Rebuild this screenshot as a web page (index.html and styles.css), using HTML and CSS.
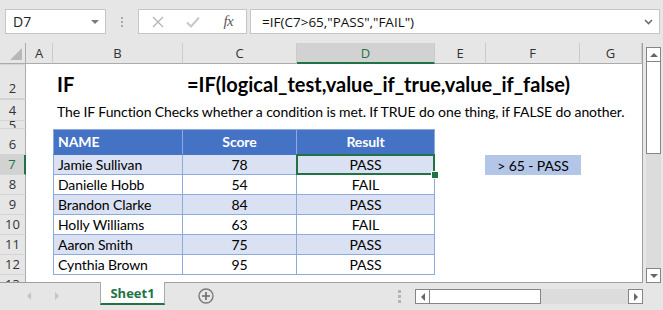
FILE: index.html
```html
<!DOCTYPE html>
<html lang="en">
<head>
    <meta charset="UTF-8">
    <title>IF Function - Excel</title>
    <link rel="stylesheet" href="styles.css">
</head>
<body>
    <div class="toolbar">
        <div class="namebox"><span>D7</span><span class="caret"></span></div>
        <div class="grip"><span></span><span></span><span></span></div>
        <div class="fbuttons">
            <span class="fbtn">
                <svg width="12" height="12" viewBox="0 0 12 12"><path d="M1 1L11 11M11 1L1 11" stroke="#b4b4b4" stroke-width="1.3" fill="none"/></svg>
            </span>
            <span class="fbtn">
                <svg width="14" height="12" viewBox="0 0 14 12"><path d="M1 6.5L5 10.5L13 1.5" stroke="#c8c8c8" stroke-width="2" fill="none"/></svg>
            </span>
            <span class="fbtn fx">fx</span>
        </div>
        <div class="finput">
            <span>=IF(C7&gt;65,"PASS","FAIL")</span>
            <svg class="chev" width="9" height="6" viewBox="0 0 9 6"><path d="M1 1L4.5 4.5L8 1" stroke="#6e6e6e" stroke-width="1.6" fill="none"/></svg>
        </div>
    </div>

    <div class="sheet">
        <div class="grid">
            <div class="row colheads">
                <div class="corner"><span class="tri"></span></div>
                <div class="ch">A</div>
                <div class="ch">B</div>
                <div class="ch">C</div>
                <div class="ch active">D</div>
                <div class="ch">E</div>
                <div class="ch">F</div>
                <div class="ch">G</div>
            </div>
            <div class="row h35 hidden-above">
                <div class="rh">2</div>
                <div class="c"></div>
                <div class="c title">IF</div>
                <div class="c title">=IF(logical_test,value_if_true,value_if_false)</div>
                <div class="c"></div><div class="c"></div><div class="c"></div><div class="c"></div>
            </div>
            <div class="row h22 hidden-above">
                <div class="rh">4</div>
                <div class="c"></div>
                <div class="c desc">The IF Function Checks whether a condition is met. If TRUE do one thing, if FALSE do another.</div>
                <div class="c"></div><div class="c"></div><div class="c"></div><div class="c"></div><div class="c"></div>
            </div>
            <div class="row h8">
                <div class="rh clip">5</div>
                <div class="c"></div><div class="c"></div><div class="c"></div><div class="c"></div><div class="c"></div><div class="c"></div><div class="c"></div>
            </div>
            <div class="row h26">
                <div class="rh">6</div>
                <div class="c"></div>
                <div class="c tb th first">NAME</div>
                <div class="c tb th mid">Score</div>
                <div class="c tb th mid">Result</div>
                <div class="c"></div><div class="c"></div><div class="c"></div>
            </div>
            <div class="row band">
                <div class="rh active">7</div>
                <div class="c"></div>
                <div class="c tb first">Jamie Sullivan</div>
                <div class="c tb mid">78</div>
                <div class="c tb mid sel">PASS</div>
                <div class="c"></div>
                <div class="c mid note">&gt; 65 - PASS</div>
                <div class="c"></div>
            </div>
            <div class="row">
                <div class="rh">8</div>
                <div class="c"></div>
                <div class="c tb first">Danielle Hobb</div>
                <div class="c tb mid">54</div>
                <div class="c tb mid">FAIL</div>
                <div class="c"></div><div class="c"></div><div class="c"></div>
            </div>
            <div class="row band">
                <div class="rh">9</div>
                <div class="c"></div>
                <div class="c tb first">Brandon Clarke</div>
                <div class="c tb mid">84</div>
                <div class="c tb mid">PASS</div>
                <div class="c"></div><div class="c"></div><div class="c"></div>
            </div>
            <div class="row">
                <div class="rh">10</div>
                <div class="c"></div>
                <div class="c tb first">Holly Williams</div>
                <div class="c tb mid">63</div>
                <div class="c tb mid">FAIL</div>
                <div class="c"></div><div class="c"></div><div class="c"></div>
            </div>
            <div class="row band">
                <div class="rh">11</div>
                <div class="c"></div>
                <div class="c tb first">Aaron Smith</div>
                <div class="c tb mid">75</div>
                <div class="c tb mid">PASS</div>
                <div class="c"></div><div class="c"></div><div class="c"></div>
            </div>
            <div class="row">
                <div class="rh">12</div>
                <div class="c"></div>
                <div class="c tb first">Cynthia Brown</div>
                <div class="c tb mid">95</div>
                <div class="c tb mid">PASS</div>
                <div class="c"></div><div class="c"></div><div class="c"></div>
            </div>
            <div class="row">
                <div class="rh">13</div>
                <div class="c"></div><div class="c"></div><div class="c"></div><div class="c"></div><div class="c"></div><div class="c"></div><div class="c"></div>
            </div>
        </div>

        <div class="vscroll">
            <div class="sbtn"><span class="arr up"></span></div>
            <div class="vthumb"></div>
            <div class="vtrack"></div>
            <div class="sbtn"><span class="arr down"></span></div>
        </div>
    </div>

    <div class="tabbar">
        <div class="nav">
            <span class="arr left light"></span>
            <span class="arr right light"></span>
        </div>
        <div class="tab">Sheet1</div>
        <svg class="add" width="16" height="16" viewBox="0 0 16 16">
            <circle cx="8" cy="8" r="7" stroke="#7a7a7a" stroke-width="1.4" fill="none"/>
            <path d="M8 4V12M4 8H12" stroke="#6a6a6a" stroke-width="1.6"/>
        </svg>
        <div class="grip bottom"><span></span><span></span><span></span></div>
        <div class="hscroll">
            <div class="sbtn"><span class="arr left"></span></div>
            <div class="hthumb"></div>
            <div class="htrack"></div>
            <div class="sbtn"><span class="arr right"></span></div>
        </div>
    </div>
</body>
</html>
```

FILE: styles.css
```css
*, *::before, *::after {
    box-sizing: border-box;
}

body {
    margin: 0;
    width: 663px;
    height: 310px;
    overflow: hidden;
    background: #e6e6e6;
    font-family: "Open Sans", "Liberation Sans", sans-serif;
    color: #222;
}

/* ----- formula bar ----- */
.toolbar {
    height: 43px;
    display: flex;
    align-items: flex-start;
    padding: 9px 0 0 5px;
}

.namebox {
    width: 101px;
    height: 25px;
    background: #fff;
    border: 1px solid #c6c6c6;
    display: flex;
    align-items: center;
    justify-content: space-between;
    padding: 0 6px 0 7px;
    font-size: 14px;
}

.caret {
    width: 0;
    height: 0;
    border-left: 4px solid transparent;
    border-right: 4px solid transparent;
    border-top: 4px solid #7a7a7a;
}

.grip {
    width: 32px;
    height: 25px;
    display: flex;
    flex-direction: column;
    align-items: center;
    justify-content: center;
    gap: 2px;
}

.grip span {
    width: 2px;
    height: 2px;
    background: #a8a8a8;
}

.fbuttons {
    width: 109px;
    height: 25px;
    background: #fff;
    border: 1px solid #c6c6c6;
    display: flex;
    align-items: center;
    padding-left: 1px;
}

.fbtn {
    width: 36px;
    display: flex;
    justify-content: center;
    align-items: center;
}

.fx {
    font-family: "Liberation Serif", serif;
    font-style: italic;
    font-size: 15px;
    color: #5a5a5a;
    letter-spacing: -0.5px;
}

.finput {
    width: 410px;
    height: 25px;
    margin-left: 3px;
    background: #fff;
    border: 1px solid #c6c6c6;
    display: flex;
    align-items: center;
    justify-content: space-between;
    padding: 0 6px 0 11px;
    font-size: 13.5px;
    color: #111;
}

/* ----- sheet grid ----- */
.sheet {
    height: 240px;
    display: flex;
}

.grid {
    width: 643px;
    height: 240px;
    background: #fff;
    border-right: 1px solid #9e9e9e;
    border-bottom: 1px solid #9e9e9e;
    overflow: hidden;
}

.row {
    display: grid;
    grid-template-columns: 26px 27px 130px 114px 138px 51px 94px 62px;
    height: 20px;
}

.h35 { height: 35px; }
.h22 { height: 22px; }
.h8 { height: 8px; }
.h26 { height: 26px; }

.colheads {
    height: 21px;
    background: #e6e6e6;
}

.corner {
    border-right: 1px solid #ababab;
    border-bottom: 1px solid #ababab;
    display: flex;
    justify-content: flex-end;
    align-items: flex-end;
    padding: 0 3px 3px 0;
}

.tri {
    width: 0;
    height: 0;
    border-left: 12px solid transparent;
    border-bottom: 12px solid #b8b8b8;
}

.ch {
    border-right: 1px solid #cbcbcb;
    border-bottom: 1px solid #ababab;
    display: flex;
    align-items: center;
    justify-content: center;
    font-size: 13px;
    color: #333;
}

.ch.active {
    background: #d2d2d2;
    color: #217346;
    border-bottom: 2px solid #217346;
}

.rh {
    background: #e6e6e6;
    border-right: 1px solid #ababab;
    border-bottom: 1px solid #d4d4d4;
    display: flex;
    align-items: flex-end;
    justify-content: center;
    padding-bottom: 1px;
    font-size: 13px;
    color: #333;
    overflow: hidden;
}

.rh.clip {
    align-items: flex-start;
    line-height: 8px;
    padding-bottom: 0;
}

.rh.active {
    background: #d2d2d2;
    color: #217346;
    border-right: 2px solid #217346;
}

.hidden-above .rh {
    border-top: 1px solid #d4d4d4;
}

.c {
    display: flex;
    align-items: flex-end;
    padding: 0 4px 1px;
    white-space: nowrap;
    font-family: Lato, "Liberation Sans", sans-serif;
    font-size: 14px;
    letter-spacing: -0.1px;
    color: #000;
}

.title {
    font-size: 20px;
    font-weight: bold;
    padding-bottom: 3px;
    letter-spacing: 0;
}

.desc {
    padding-bottom: 1px;
}

/* ----- table ----- */
.tb {
    border-right: 1px solid #8ea9db;
    border-bottom: 1px solid #8ea9db;
}

.tb.first {
    border-left: 1px solid #8ea9db;
}

.mid {
    justify-content: center;
}

.th {
    background: #4472c4;
    color: #fff;
    font-weight: bold;
    border-top: 1px solid #8ea9db;
    border-bottom-color: #4472c4;
    align-items: center;
}

.band .tb {
    background: #d9e1f2;
}

.note {
    background: #b4c6e7;
    margin-left: -1px;
    margin-right: -1px;
}

.sel {
    position: relative;
}

.sel::after {
    content: "";
    position: absolute;
    top: -1px;
    left: -1px;
    right: -1px;
    bottom: -1px;
    border: 2px solid #217346;
    z-index: 2;
}

.sel::before {
    content: "";
    position: absolute;
    right: -4px;
    bottom: -4px;
    width: 6px;
    height: 6px;
    background: #217346;
    outline: 1px solid #fff;
    z-index: 3;
}

/* ----- scrollbars ----- */
.vscroll {
    width: 15px;
    height: 236px;
    margin: 4px 0 0 3px;
    display: flex;
    flex-direction: column;
    background: #dcdcdc;
}

.sbtn {
    width: 15px;
    height: 15px;
    flex: none;
    background: #fff;
    border: 1px solid #858585;
    display: flex;
    align-items: center;
    justify-content: center;
}

.vthumb {
    height: 92px;
    background: #fff;
    border: 1px solid #858585;
    border-top: none;
}

.vtrack {
    flex: 1;
}

.arr {
    width: 0;
    height: 0;
}

.arr.up {
    border-left: 4px solid transparent;
    border-right: 4px solid transparent;
    border-bottom: 4px solid #666;
}

.arr.down {
    border-left: 4px solid transparent;
    border-right: 4px solid transparent;
    border-top: 4px solid #666;
}

.arr.left {
    border-top: 4px solid transparent;
    border-bottom: 4px solid transparent;
    border-right: 4px solid #666;
}

.arr.right {
    border-top: 4px solid transparent;
    border-bottom: 4px solid transparent;
    border-left: 4px solid #666;
}

.arr.light.left {
    border-right-color: #c4c4c4;
}

.arr.light.right {
    border-left-color: #c4c4c4;
}

/* ----- sheet tabs ----- */
.tabbar {
    height: 27px;
    display: flex;
    align-items: flex-start;
}

.nav {
    width: 100px;
    height: 25px;
    display: flex;
    align-items: center;
    gap: 24px;
    padding-left: 27px;
}

.tab {
    width: 65px;
    height: 23px;
    margin-top: -1px;
    background: #fff;
    border-left: 1px solid #ababab;
    border-right: 1px solid #ababab;
    border-bottom: 2px solid #217346;
    display: flex;
    align-items: center;
    justify-content: center;
    font-size: 13px;
    font-weight: bold;
    color: #217346;
}

.add {
    margin: 5px 0 0 33px;
}

.grip.bottom {
    width: 4px;
    height: 14px;
    margin: 6px 0 0 183px;
    gap: 2px;
}

.grip.bottom span {
    width: 3px;
    height: 3px;
    background: #b4b4b4;
}

.hscroll {
    width: 228px;
    height: 15px;
    margin: 6px 0 0 14px;
    display: flex;
    background: #dcdcdc;
}

.hthumb {
    width: 111px;
    background: #fff;
    border: 1px solid #858585;
    border-left: none;
}

.htrack {
    flex: 1;
}
```
